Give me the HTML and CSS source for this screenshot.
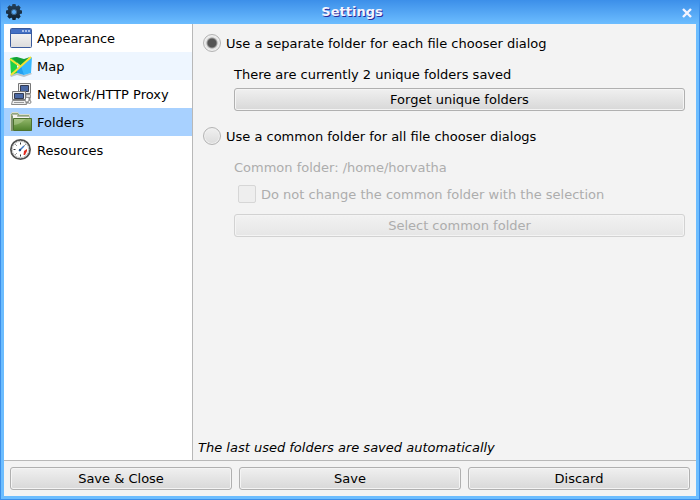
FILE: index.html
```html
<!doctype html>
<html lang="en">
<head>
    <meta charset="UTF-8">
    <meta name="viewport" content="width=device-width, initial-scale=1.0">
    <title>Settings</title>
    <link rel="stylesheet" href="styles.css">
</head>
<body>
    <div class="window">
        <header class="titlebar">
            <svg class="gear" viewBox="0 0 16 16" aria-hidden="true">
                <defs>
                    <linearGradient id="steel" gradientUnits="userSpaceOnUse" x1="0" y1="0" x2="0" y2="16">
                        <stop offset="0" stop-color="#24415c"/>
                        <stop offset="1" stop-color="#10202f"/>
                    </linearGradient>
                </defs>
                <g fill="url(#steel)">
                    <path d="M6.5 0h3l.7 3h-4.400zM6.500 16h3l.7-3h-4.400z"/>
                    <path d="M0 6.500v3l3 .7v-4.400zM16 6.500v3l-3 .7v-4.400z"/>
                    <path d="M1.300 3.400l2.100-2.100 3 1.700-3.400 3.400zM14.700 3.400l-2.100-2.100-3 1.700 3.400 3.400z"/>
                    <path d="M1.300 12.600l2.100 2.100 3-1.700-3.400-3.400zM14.700 12.600l-2.100 2.100-3-1.700 3.400-3.400z"/>
                    <circle cx="8" cy="8" r="6.200"/>
                </g>
                <circle cx="8" cy="8" r="2.600" fill="#58a8f4" stroke="#3c6488"/>
            </svg>
            <h1 class="title">Settings</h1>
            <button class="close" type="button" aria-label="Close">
                <svg viewBox="0 0 10 10" aria-hidden="true">
                    <path d="M1 1L9 9M9 1L1 9" stroke="#f4f4ff" stroke-width="2.4" fill="none"/>
                </svg>
            </button>
        </header>

        <div class="main">
            <nav class="sidebar">
                <a class="item" href="#appearance">
                    <svg class="icon" viewBox="0 0 24 24" aria-hidden="true">
                        <defs>
                            <linearGradient id="pane" x1="0" y1="0" x2="0" y2="1">
                                <stop offset="0" stop-color="#fafafa"/>
                                <stop offset="1" stop-color="#dcdcdc"/>
                            </linearGradient>
                        </defs>
                        <rect x="1.5" y="2.5" width="21" height="19" rx="1" fill="url(#pane)" stroke="#3a5a9c"/>
                        <rect x="2" y="3" width="20" height="4" fill="#4571c4"/>
                        <path d="M2 7.5H22" stroke="#3560b0"/>
                        <path d="M13 4h2v2h-2zM16 4h2v2h-2zM19 4h2v2h-2z" fill="#a9c0ea"/>
                    </svg>
                    <span class="text">Appearance</span>
                </a>
                <a class="item hover" href="#map">
                    <svg class="icon" viewBox="0 0 24 24" aria-hidden="true">
                        <path d="M1 21L8 19L15 21L22 19L23 20L15 23L8 21L2 23z" fill="#b9c2c8"/>
                        <path d="M1 4L8 3V19L2 21z" fill="#20d048"/>
                        <path d="M3 4L8 3L15 5L21 3L12 12z" fill="#13a03a"/>
                        <path d="M8 14L12 11L15 12V21L8 19z" fill="#22a0f0"/>
                        <path d="M12 12L23 3L22 19L15 21z" fill="#38b8ff"/>
                        <path d="M1 5L12 13M22 3L12 12L2 21" stroke="#f3e233" stroke-width="2" fill="none"/>
                    </svg>
                    <span class="text">Map</span>
                </a>
                <a class="item" href="#network">
                    <svg class="icon" viewBox="0 0 24 24" aria-hidden="true">
                        <path d="M9.5 1.5h12v10h-12z" fill="#eee" stroke="#777"/>
                        <path d="M11.5 3.5h8v6h-8z" fill="#4a68a4" stroke="#333b50"/>
                        <path d="M17 12.500h4.500v3h-4.500z" fill="#ddd" stroke="#999"/>
                        <path d="M3.5 9.5h13v8h-13z" fill="#eee" stroke="#777"/>
                        <path d="M5.5 11.500h9v5h-9z" fill="#4a68a4" stroke="#333b50"/>
                        <path d="M3.5 18.500h13l1 4h-15z" fill="#eee" stroke="#888"/>
                        <path d="M5 20.500h10" stroke="#999"/>
                        <path d="M17 20.500h2M20.500 15v4" stroke="#888" stroke-width="2"/>
                        <circle cx="20.500" cy="20" r="1.500" fill="#eee" stroke="#888"/>
                    </svg>
                    <span class="text">Network/HTTP Proxy</span>
                </a>
                <a class="item selected" href="#folders" aria-current="page">
                    <svg class="icon" viewBox="0 0 24 24" aria-hidden="true">
                        <defs>
                            <linearGradient id="folder" x1="0" y1="0" x2="0" y2="1">
                                <stop offset="0" stop-color="#94b86c"/>
                                <stop offset="1" stop-color="#4f822c"/>
                            </linearGradient>
                        </defs>
                        <path d="M1.5 20.5V4.5L3 2.5H9L10.5 4.5H20.5V9" fill="#8fa67a" stroke="#d8dccf"/>
                        <path d="M3.5 20.5V4.5H8.5V6.5H20.5V9" fill="#f4f4ee" stroke="#b2b8a6"/>
                        <path d="M2 6h2v15H2z" fill="#809470"/>
                        <path d="M4.5 8.5h18v12h-18z" fill="url(#folder)" stroke="#4c702e"/>
                        <path d="M5 15Q11 14 14 11T22 9H5z" fill="#c0d4a3" opacity=".45"/>
                    </svg>
                    <span class="text">Folders</span>
                </a>
                <a class="item" href="#resources">
                    <svg class="icon" viewBox="0 0 24 24" aria-hidden="true">
                        <circle cx="11.5" cy="11.5" r="9.600" fill="#fff" stroke="#505050" stroke-width="1.800"/>
                        <circle cx="11.5" cy="11.5" r="8.200" fill="#fff" stroke="#c4c4c4"/>
                        <path d="M11.5 4.500v2M4.500 11.500h2M11.500 16.500v2M6.500 6.500l1 1M6.500 16.500l1-1M16.500 6.500l-1 1" stroke="#333"/>
                        <path d="M15 13l3-2v2l-2 4h-1.500z" fill="#e12d20"/>
                        <path d="M10 13L15 8" stroke="#4478c4" stroke-width="1.5"/>
                        <circle cx="11" cy="12" r="1.200" fill="#28507f"/>
                    </svg>
                    <span class="text">Resources</span>
                </a>
            </nav>

            <form class="content">
                <label class="choice"><input type="radio" name="mode" checked><span class="text">Use a separate folder for each file chooser dialog</span></label>
                <div class="group">
                    <p class="status">There are currently 2 unique folders saved</p>
                    <button class="btn" type="button">Forget unique folders</button>
                </div>
                <label class="choice"><input type="radio" name="mode"><span class="text">Use a common folder for all file chooser dialogs</span></label>
                <div class="group disabled">
                    <p class="status">Common folder: /home/horvatha</p>
                    <label class="check"><input type="checkbox" disabled><span class="text">Do not change the common folder with the selection</span></label>
                    <button class="btn" type="button" disabled>Select common folder</button>
                </div>
                <p class="note">The last used folders are saved automatically</p>
            </form>
        </div>

        <footer class="actions">
            <button class="btn" type="button">Save &amp; Close</button>
            <button class="btn" type="button">Save</button>
            <button class="btn" type="button">Discard</button>
        </footer>
    </div>
</body>
</html>
```
FILE: styles.css
```css
* {
    box-sizing: border-box;
}
body {
    margin: 0;
    font: 13px/20px "DejaVu Sans", sans-serif;
    color: #000;
}
button, input {
    font: inherit;
    margin: 0;
}
p, h1 {
    margin: 0;
}
.window {
    display: flex;
    flex-direction: column;
    min-height: 100vh;
    border: 1px solid #3c8fe9;
    border-top: none;
    background: #6cbdff;
    padding: 0 3px 3px;
}
.titlebar {
    display: flex;
    align-items: center;
    height: 24px;
    margin: 0 -3px;
    padding: 0 7px 0 5px;
    background: linear-gradient(#3c8fe9, #6cbdff);
}
.gear {
    width: 16px;
    height: 16px;
}
.title {
    flex: 1;
    font-size: 13px;
    line-height: 24px;
    text-align: center;
    color: #f4f4ff;
    text-shadow: 1px 1px 0 #2a2a98;
}
.close {
    display: flex;
    padding: 2px 0 0;
    border: none;
    background: none;
}
.close svg {
    width: 10px;
    height: 10px;
}
.main {
    display: flex;
    flex: 1;
    background: #f3f3f3;
}
.sidebar {
    width: 189px;
    border-right: 1px solid #b8b8b8;
    background: #fff;
}
.item {
    display: flex;
    align-items: center;
    gap: 4px;
    height: 28px;
    padding-left: 5px;
    color: #000;
    text-decoration: none;
}
.item.hover {
    background: #eef6ff;
}
.item.selected {
    background: #a8d1ff;
}
.icon {
    width: 24px;
    height: 24px;
}
.text {
    padding-top: 2px;
}
.content {
    display: flex;
    flex: 1;
    flex-direction: column;
    padding: 8px 11px 2px 10px;
}
.choice, .check {
    display: flex;
    align-items: center;
    gap: 5px;
}
.choice input, .check input {
    appearance: none;
    width: 18px;
    height: 18px;
    border: 1px solid #b4b4b4;
    background: linear-gradient(#f0f0f0, #dcdcdc);
}
.choice input {
    border-radius: 50%;
    box-shadow: inset 0 0 0 1px #f0f0f0;
}
.choice input:checked {
    background: radial-gradient(circle, #555 4px, #e6e6e6 6px);
}
.group {
    display: flex;
    flex-direction: column;
    padding: 11px 0 14px 31px;
}
.status {
    margin-bottom: 3px;
}
.btn {
    height: 23px;
    padding: 1px 0 0;
    border: 1px solid #b0b0b0;
    border-radius: 3px;
    background: linear-gradient(#f0f0f0, #d8d8d8);
    box-shadow: inset 0 0 0 1px #f4f4f4;
    color: #000;
}
.disabled, .disabled .btn {
    color: #adadad;
}
.disabled .btn {
    border-color: #d2d2d2;
    background: linear-gradient(#f2f2f2, #e6e6e6);
}
.check {
    margin: 2px 0 9px 4px;
}
.check input {
    border-color: #d6d6d6;
    border-radius: 2px;
    background: #eee;
}
.note {
    margin: auto 0 0 -5px;
    font-style: italic;
}
.actions {
    display: flex;
    gap: 7px;
    padding: 6px;
    border-top: 1px solid #b8b8b8;
    background: #f3f3f3;
}
.actions .btn {
    flex: 1;
}
```
